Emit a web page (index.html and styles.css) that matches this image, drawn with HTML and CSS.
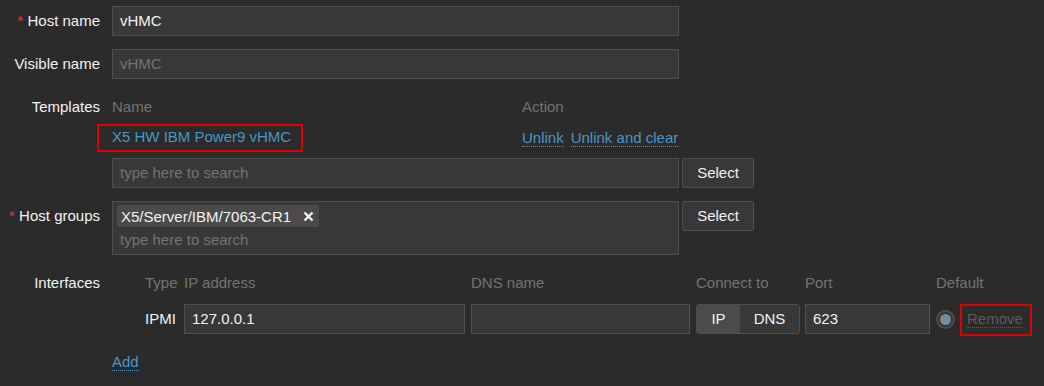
FILE: index.html
```html
<!DOCTYPE html>
<html>
<head>
<meta charset="utf-8">
<link rel="stylesheet" href="styles.css">
</head>
<body>
<div class="form">
  <div class="row">
    <div class="label"><span class="req">*</span> Host name</div>
    <div class="field"><div class="input w567">vHMC</div></div>
  </div>
  <div class="row">
    <div class="label">Visible name</div>
    <div class="field"><div class="input w567 muted">vHMC</div></div>
  </div>
  <div class="row">
    <div class="label">Templates</div>
    <div class="field">
      <div class="tpl-grid">
        <div class="th">Name</div>
        <div class="th">Action</div>
        <div class="td"><span class="link plain marked-a">X5 HW IBM Power9 vHMC</span></div>
        <div class="td actions"><span class="link">Unlink</span><span class="link">Unlink and clear</span></div>
      </div>
      <div class="inline after-tpl">
        <div class="input w567 muted">type here to search</div>
        <div class="btn">Select</div>
      </div>
    </div>
  </div>
  <div class="row">
    <div class="label"><span class="req">*</span> Host groups</div>
    <div class="field">
      <div class="inline top">
        <div class="multi w567">
          <div class="chip">X5/Server/IBM/7063-CR1
            <svg class="x" width="11" height="11" viewBox="0 0 11 11"><path d="M1.5 1.5 L9.5 9.5 M9.5 1.5 L1.5 9.5" stroke="#f2f2f2" stroke-width="2.4" stroke-linecap="butt"/></svg>
          </div>
          <div class="ms-ph">type here to search</div>
        </div>
        <div class="btn">Select</div>
      </div>
    </div>
  </div>
  <div class="row">
    <div class="label">Interfaces</div>
    <div class="field">
      <div class="if-grid">
        <div class="th">Type</div>
        <div class="th">IP address</div>
        <div class="th">DNS name</div>
        <div class="th">Connect to</div>
        <div class="th">Port</div>
        <div class="th">Default</div>
        <div class="td itype">IPMI</div>
        <div class="td"><div class="input w281">127.0.0.1</div></div>
        <div class="td"><div class="input w219"></div></div>
        <div class="td">
          <div class="seg"><span class="seg-on">IP</span><span class="seg-off">DNS</span></div>
        </div>
        <div class="td"><div class="input w125">623</div></div>
        <div class="td def">
          <span class="radio"><span class="dot"></span></span>
          <span class="link disabled marked-b">Remove</span>
        </div>
      </div>
      <div class="add"><span class="link">Add</span></div>
    </div>
  </div>
</div>
</body>
</html>
```

FILE: styles.css
```css
* { box-sizing: border-box; }
html, body {
  margin: 0;
  background: #2b2b2b;
}
body {
  font-family: "Liberation Sans", Arial, sans-serif;
  font-size: 15px;
  color: #f2f2f2;
  width: 1044px;
  height: 386px;
  overflow: hidden;
}
.form {
  padding-top: 6px;
  display: flex;
  flex-direction: column;
  gap: 13px;
}
.row {
  display: grid;
  grid-template-columns: 100px 1fr;
  column-gap: 12px;
}
.label {
  text-align: right;
  line-height: 30px;
  height: 30px;
  white-space: nowrap;
}
.req {
  color: #e33734;
}
.input {
  height: 30px;
  line-height: 28px;
  background: #383838;
  border: 1px solid #4f4f4f;
  padding: 0 7px;
  color: #f2f2f2;
  white-space: nowrap;
}
.input.muted { color: #737373; }
.w567 { width: 567px; }
.w281 { width: 281px; }
.w219 { width: 219px; }
.w125 { width: 125px; }

.th {
  color: #737373;
  height: 30px;
  line-height: 30px;
}
.tpl-grid {
  display: grid;
  grid-template-columns: 410px auto;
}
.tpl-grid .td {
  height: 30px;
  line-height: 30px;
}
.tpl-grid .actions {
  display: flex;
  align-items: center;
  gap: 7px;
  padding-top: 1px;
}
.link {
  color: #4796c4;
  border-bottom: 1px dotted #4796c4;
  line-height: 17px;
  display: inline-block;
}
.link.plain {
  border-bottom: none;
}
.link.disabled {
  color: #5a5a5a;
  border-bottom-color: #5a5a5a;
}
.marked-a, .marked-b {
  position: relative;
}
.marked-a::after {
  content: "";
  position: absolute;
  left: -15px;
  right: -12px;
  top: -4px;
  bottom: -7px;
  border: 2px solid #e00000;
}
.marked-b::after {
  content: "";
  position: absolute;
  left: -7px;
  right: -9px;
  top: -6px;
  bottom: -9px;
  border: 2px solid #e00000;
}
.inline {
  display: flex;
  gap: 3px;
  align-items: center;
}
.inline.top { align-items: flex-start; }
.after-tpl { margin-top: 6px; }
.btn {
  width: 72px;
  height: 30px;
  line-height: 28px;
  text-align: center;
  background: #383838;
  border: 1px solid #4f4f4f;
  border-radius: 2px;
  color: #f2f2f2;
}
.multi {
  height: 54px;
  background: #383838;
  border: 1px solid #4f4f4f;
  padding: 3px 4px 0 4px;
}
.chip {
  display: inline-flex;
  align-items: center;
  height: 22px;
  padding: 0 5px 0 4px;
  background: #4a4a4a;
  border-radius: 2px;
  gap: 12px;
  color: #f2f2f2;
}
.chip .x { display: block; }
.ms-ph {
  color: #737373;
  line-height: 24px;
  padding-left: 3px;
  margin-top: 1px;
}
.if-grid {
  display: grid;
  grid-template-columns: 39px 287px 225px 109px 131px auto;
  padding-left: 33px;
  row-gap: 6px;
}
.if-grid .td {
  height: 30px;
  display: flex;
  align-items: center;
}
.itype { line-height: 30px; }
.seg {
  display: flex;
  width: 104px;
  height: 30px;
  border: 1px solid #4f4f4f;
  border-radius: 3px;
  overflow: hidden;
  line-height: 28px;
}
.seg-on {
  width: 43px;
  background: #4b4b4b;
  text-align: center;
}
.seg-off {
  flex: 1;
  background: #383838;
  text-align: center;
}
.def {
  gap: 12px;
}
.radio {
  width: 19px;
  height: 19px;
  border-radius: 50%;
  border: 2px solid #4c4c4c;
  background: #363636;
  display: flex;
  align-items: center;
  justify-content: center;
}
.dot {
  width: 11px;
  height: 11px;
  border-radius: 50%;
  background: #6e8ea4;
}
.add {
  margin-top: 19px;
}
```
